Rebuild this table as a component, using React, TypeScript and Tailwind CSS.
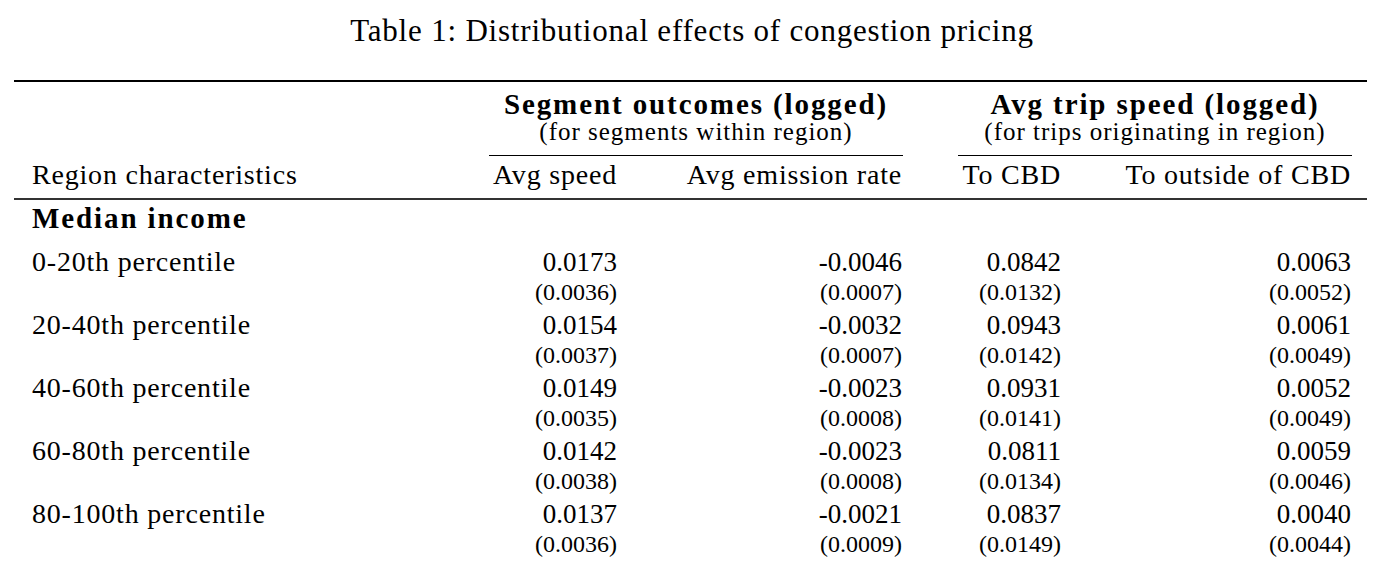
const rows = [
  { label: "0-20th percentile", vals: ["0.0173", "-0.0046", "0.0842", "0.0063"], se: ["(0.0036)", "(0.0007)", "(0.0132)", "(0.0052)"] },
  { label: "20-40th percentile", vals: ["0.0154", "-0.0032", "0.0943", "0.0061"], se: ["(0.0037)", "(0.0007)", "(0.0142)", "(0.0049)"] },
  { label: "40-60th percentile", vals: ["0.0149", "-0.0023", "0.0931", "0.0052"], se: ["(0.0035)", "(0.0008)", "(0.0141)", "(0.0049)"] },
  { label: "60-80th percentile", vals: ["0.0142", "-0.0023", "0.0811", "0.0059"], se: ["(0.0038)", "(0.0008)", "(0.0134)", "(0.0046)"] },
  { label: "80-100th percentile", vals: ["0.0137", "-0.0021", "0.0837", "0.0040"], se: ["(0.0036)", "(0.0009)", "(0.0149)", "(0.0044)"] },
];

// right padding of each numeric column, matching the LaTeX column separation
const numPad = ["pr-[18px]", "pr-[18px]", "pr-[18px]", "pr-[16px]"];

const cols = "grid grid-cols-[457px_164px_285px_159px_288px]";

const App = () => {
  return (
    <div className="w-[1384px] h-[562px] bg-white text-black font-['Liberation_Serif',serif] overflow-hidden pt-[11px]">
      {/* Caption */}
      <div className="h-[40px] leading-[40px] text-center text-[31px] tracking-[0.8px]">
        Table 1: Distributional effects of congestion pricing
      </div>

      <div className="w-[1353px] ml-[14px] mt-[29px]">
        {/* top rule */}
        <div className="h-[2px] bg-black" />

        {/* group headers */}
        <div className={`${cols} mt-[4px]`}>
          <div />
          <div className="col-span-2 ml-[18px] mr-[17px] text-center">
            <div className="h-[36px] leading-[36px] font-bold text-[29px] tracking-[1.9px]">Segment outcomes (logged)</div>
            <div className="h-[20px] leading-[20px] text-[25px] tracking-[1px]">(for segments within region)</div>
            <div className="h-px bg-black mt-[13px]" />
          </div>
          <div className="col-span-2 ml-[38px] mr-[15px] text-center">
            <div className="h-[36px] leading-[36px] font-bold text-[29px] tracking-[1.9px]">Avg trip speed (logged)</div>
            <div className="h-[20px] leading-[20px] text-[25px] tracking-[1px]">(for trips originating in region)</div>
            <div className="h-px bg-black mt-[13px]" />
          </div>
        </div>

        {/* column headers */}
        <div className={`${cols} h-[38px] leading-[38px] text-[28px] tracking-[0.8px]`}>
          <div className="pl-[18px]">Region characteristics</div>
          <div className="text-right pr-[18px]">Avg speed</div>
          <div className="text-right pr-[18px]">Avg emission rate</div>
          <div className="text-right pr-[18px]">To CBD</div>
          <div className="text-right pr-[16px]">To outside of CBD</div>
        </div>

        {/* mid rule */}
        <div className="h-[2px] bg-[#333] mt-[4px]" />

        <div className="h-[36px] leading-[36px] pl-[18px] font-bold text-[29px] tracking-[1.9px]">Median income</div>

        <div className="mt-[11px]">
          {rows.map((r) => (
            <div key={r.label} className="h-[63px]">
              <div className={`${cols} h-[30px] leading-[30px]`}>
                <div className="pl-[18px] text-[28px] tracking-[0.8px]">{r.label}</div>
                {r.vals.map((v, i) => (
                  <div key={i} className={`text-right text-[27px] ${numPad[i]}`}>{v}</div>
                ))}
              </div>
              <div className={`${cols} h-[30px] leading-[30px]`}>
                <div />
                {r.se.map((v, i) => (
                  <div key={i} className={`text-right text-[24px] ${numPad[i]}`}>{v}</div>
                ))}
              </div>
            </div>
          ))}
        </div>
      </div>
    </div>
  );
};

export default App;
